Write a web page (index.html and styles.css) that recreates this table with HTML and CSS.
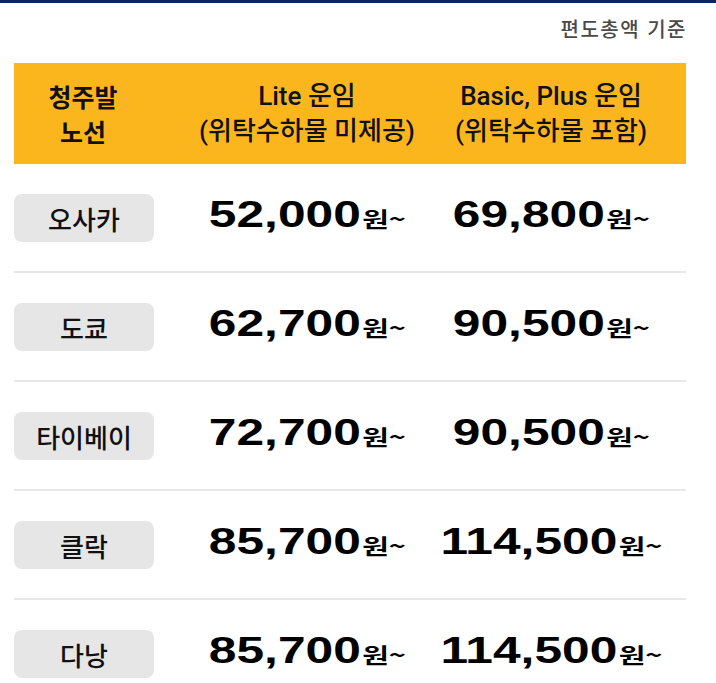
FILE: index.html
```html
<!DOCTYPE html>
<html lang="ko">
<head>
<meta charset="utf-8">
<link rel="stylesheet" href="styles.css">
</head>
<body>
<div class="topbar"></div>
<div class="wrap">
  <div class="caption">편도총액 기준</div>
  <div class="table">
    <div class="head">
      <div class="hcell hfirst">청주발<br>노선</div>
      <div class="hcell">Lite 운임<br>(위탁수하물 미제공)</div>
      <div class="hcell">Basic, Plus 운임<br>(위탁수하물 포함)</div>
    </div>
    <div class="row">
      <div class="city">오사카</div>
      <div class="price"><span class="num">52,000</span><span class="unit">원~</span></div>
      <div class="price"><span class="num">69,800</span><span class="unit">원~</span></div>
    </div>
    <div class="row">
      <div class="city">도쿄</div>
      <div class="price"><span class="num">62,700</span><span class="unit">원~</span></div>
      <div class="price"><span class="num">90,500</span><span class="unit">원~</span></div>
    </div>
    <div class="row">
      <div class="city">타이베이</div>
      <div class="price"><span class="num">72,700</span><span class="unit">원~</span></div>
      <div class="price"><span class="num">90,500</span><span class="unit">원~</span></div>
    </div>
    <div class="row">
      <div class="city">클락</div>
      <div class="price"><span class="num">85,700</span><span class="unit">원~</span></div>
      <div class="price"><span class="num">114,500</span><span class="unit">원~</span></div>
    </div>
    <div class="row">
      <div class="city">다낭</div>
      <div class="price"><span class="num">85,700</span><span class="unit">원~</span></div>
      <div class="price"><span class="num">114,500</span><span class="unit">원~</span></div>
    </div>
  </div>
</div>
</body>
</html>
```

FILE: styles.css
```css
html, body {
  margin: 0;
  padding: 0;
  background: #ffffff;
}
body {
  font-family: "Noto Sans CJK KR", "Noto Sans", sans-serif;
  color: #111;
  overflow: hidden;
}
.topbar {
  height: 3px;
  background: #05275a;
}
.wrap {
  width: 672px;
  margin-left: 14px;
}
.caption {
  text-align: right;
  font-size: 20px;
  line-height: 28px;
  letter-spacing: 1.5px;
  margin-right: -1px;
  color: #4a4a4a;
  font-weight: 500;
  margin-top: 12px;
  margin-bottom: 20px;
}
.head,
.row {
  display: grid;
  grid-template-columns: 140px 306px 182px;
  justify-items: center;
  align-items: center;
}
.head {
  background: #fcb61d;
  height: 101px;
}
.hcell {
  font-family: "Roboto", "Noto Sans CJK KR", sans-serif;
  font-size: 26px;
  font-weight: 500;
  line-height: 35px;
  text-align: center;
  white-space: nowrap;
  color: #111;
}
.hfirst {
  font-family: "Noto Sans CJK KR", sans-serif;
  font-weight: 700;
  font-size: 25px;
  padding-right: 2px;
}
.row {
  padding: 30px 0 29px;
  border-bottom: 2px solid #e8e8e8;
}
.row:last-child {
  border-bottom: none;
}
.city {
  justify-self: stretch;
  height: 48px;
  border-radius: 8px;
  background: #e6e6e6;
  display: flex;
  align-items: center;
  justify-content: center;
  font-size: 26px;
  font-weight: 500;
  color: #111;
}
.price {
  white-space: nowrap;
  color: #000;
  display: flex;
  align-items: baseline;
  transform: scaleX(1.38);
  margin-top: -6px;
}
.num {
  font-family: "Liberation Sans", sans-serif;
  font-weight: 700;
  font-size: 36px;
  line-height: 44px;
}
.unit {
  font-family: "Noto Sans CJK KR", sans-serif;
  font-weight: 700;
  font-size: 21px;
  margin-left: 1px;
}
```
